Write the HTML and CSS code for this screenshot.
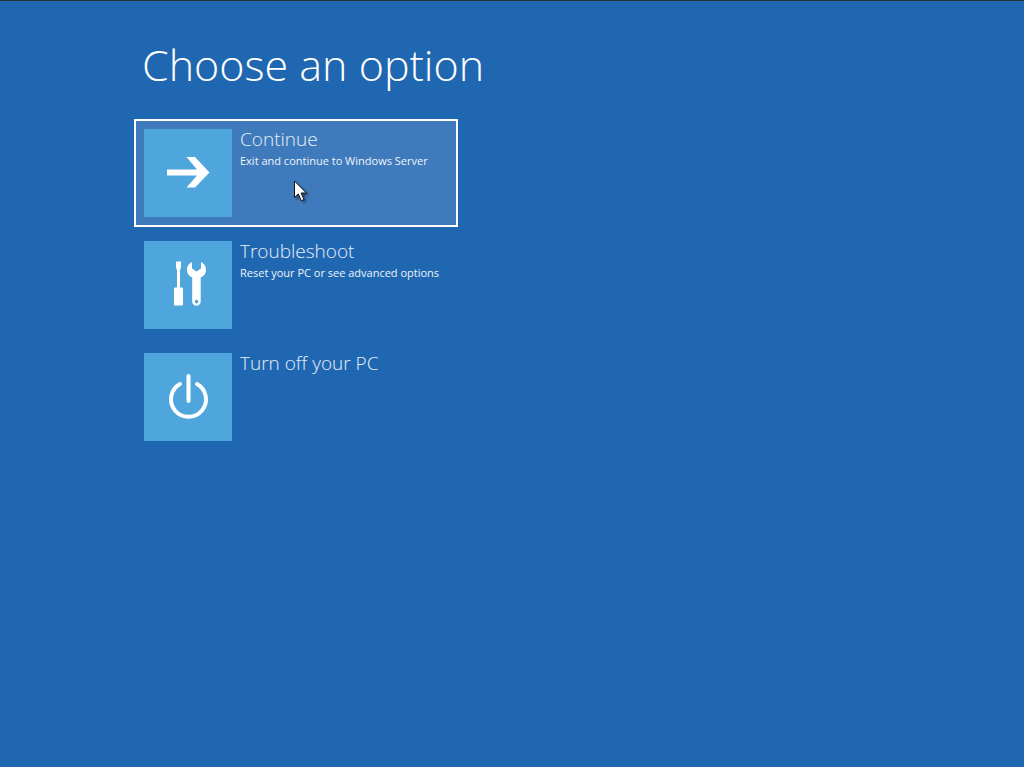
FILE: index.html
```html
<!DOCTYPE html>
<html lang="en-US">
  <head>
    <meta charset="utf-8"/>
    <meta name="viewport" content="width=device-width">
    <title>Choose an option</title>
    <link rel="stylesheet" href="styles.css">
  </head>

  <body>
    <main>
      <h1>Choose an option</h1>
      <ul class="options">
        <li>
          <button type="button" class="option selected">
            <span class="tile">
              <svg viewBox="0 0 88 88" aria-hidden="true">
                <path fill="#fff" d="M23 40.500h30L42.500 28H51L65.500 43.500 51 58.500h-8.500L53 46.500H23z"/>
              </svg>
            </span>
            <span class="text">
              <span class="name">Continue</span>
              <span class="info">Exit and continue to Windows Server</span>
            </span>
          </button>
          <svg class="cursor" viewBox="0 0 14 22" aria-hidden="true">
            <path fill="#fff" stroke="#111" d="M.5 1v16.500l3.800-3.600 3 6.800 2.800-1.200-3-6.500h5.300z"/>
          </svg>
        </li>
        <li>
          <button type="button" class="option">
            <span class="tile">
              <svg viewBox="0 0 88 88" aria-hidden="true">
                <path fill="#fff" d="M32 20.500h5v6l-1 3v17h2q1 0 1 1v16q0 1-1 1h-7q-1 0-1-1v-16q0-1 1-1h2v-17l-1-3z"/>
                <path fill="#fff" fill-rule="evenodd" d="M48 21v6.500l4.500 3 4.500-3V21c3 1.200 5 4.300 5 7.800 0 3.600-2 6.300-5.300 7.700v24a4.200 4.200 0 0 1-8.500 0v-24c-3.300-1.400-5.300-4.200-5.300-7.700 0-3.500 2-6.600 5.100-7.800zM52.500 58.800a1.800 1.800 0 1 0 .1 0z"/>
              </svg>
            </span>
            <span class="text">
              <span class="name">Troubleshoot</span>
              <span class="info">Reset your PC or see advanced options</span>
            </span>
          </button>
        </li>
        <li>
          <button type="button" class="option">
            <span class="tile">
              <svg viewBox="0 0 88 88" aria-hidden="true">
                <path fill="none" stroke="#fff" stroke-width="4" stroke-linecap="round" d="M44.500 23v25M36 31a17.500 17.500 0 1 0 17 0"/>
              </svg>
            </span>
            <span class="text">
              <span class="name">Turn off your PC</span>
            </span>
          </button>
        </li>
      </ul>
    </main>
  </body>
</html>
```
FILE: styles.css
```css
* {
  box-sizing: border-box;
}

body {
  margin: 0;
  min-height: 100vh;
  background-color: #2067b2;
  border-top: 1px solid #2b2f36;
  color: #fff;
  font-family: "Segoe UI", "Open Sans", "Noto Sans", sans-serif;
}

main {
  padding: 32px 24px 32px 134px;
}

h1 {
  margin: 0 0 22px;
  padding-left: 8px;
  font-size: 43px;
  font-weight: 300;
  line-height: 64px;
}

.options {
  list-style: none;
  margin: 0;
  padding: 0;
  display: flex;
  flex-direction: column;
  gap: 4px;
}

.options li {
  position: relative;
  max-width: 324px;
}

.option {
  display: flex;
  align-items: flex-start;
  gap: 8px;
  width: 100%;
  padding: 8px;
  border: 2px solid transparent;
  background: none;
  color: inherit;
  font: inherit;
  text-align: left;
}

.option.selected {
  background-color: #3f7bbc;
  border-color: #fff;
}

.tile {
  flex: none;
  width: 88px;
  height: 88px;
  background-color: #4ea6dd;
}

.tile svg {
  display: block;
}

.text {
  display: flex;
  flex-direction: column;
  white-space: nowrap;
}

.name {
  color: #e6eef8;
  font-size: 19px;
  font-weight: 300;
  line-height: 20px;
}

.info {
  color: #eef4fa;
  font-size: 11px;
  line-height: 24px;
}

/* mouse pointer over the selected option */
.cursor {
  position: absolute;
  left: 160px;
  top: 61px;
  width: 14px;
  height: 22px;
  filter: drop-shadow(2px 2px 1px rgba(0, 0, 0, 0.4));
}
```
